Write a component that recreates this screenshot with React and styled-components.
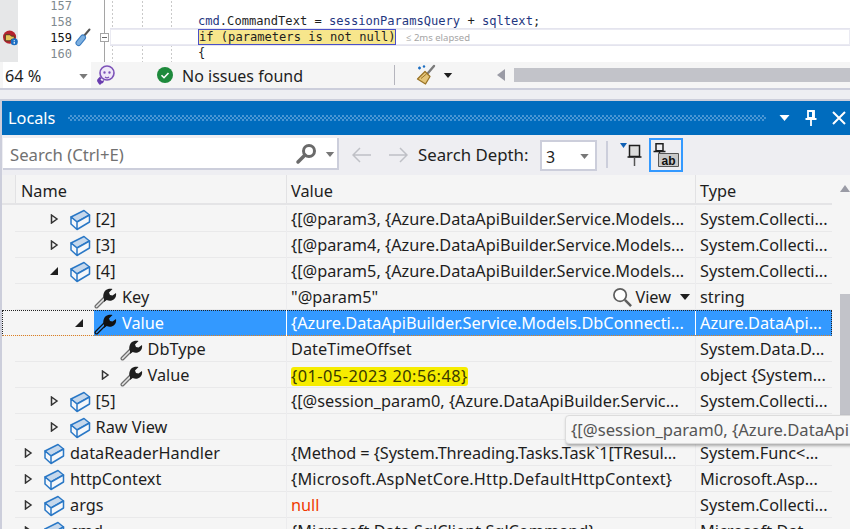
import React from 'react';
import styled, { createGlobalStyle } from 'styled-components';

const UI_FONT = `'Noto Sans', 'Open Sans', sans-serif`;
const CODE_FONT = `'DejaVu Sans Mono', 'Liberation Mono', monospace`;

const rows = [
	{ level: 1, kind: 'cube', arrow: 'closed', name: '[2]', value: '{[@param3, {Azure.DataApiBuilder.Service.Models...', type: 'System.Collecti...' },
	{ level: 1, kind: 'cube', arrow: 'closed', name: '[3]', value: '{[@param4, {Azure.DataApiBuilder.Service.Models...', type: 'System.Collecti...' },
	{ level: 1, kind: 'cube', arrow: 'open', name: '[4]', value: '{[@param5, {Azure.DataApiBuilder.Service.Models...', type: 'System.Collecti...' },
	{ level: 2, kind: 'wrench', name: 'Key', value: '"@param5"', type: 'string', view: true },
	{ level: 2, kind: 'wrench', arrow: 'open', name: 'Value', value: '{Azure.DataApiBuilder.Service.Models.DbConnecti...', type: 'Azure.DataApi...', selected: true },
	{ level: 3, kind: 'wrench', name: 'DbType', value: 'DateTimeOffset', type: 'System.Data.D...' },
	{ level: 3, kind: 'wrench', arrow: 'closed', name: 'Value', value: '{01-05-2023 20:56:48}', type: 'object {System...', changed: true },
	{ level: 1, kind: 'cube', arrow: 'closed', name: '[5]', value: '{[@session_param0, {Azure.DataApiBuilder.Servic...', type: 'System.Collecti...' },
	{ level: 1, kind: 'cube', arrow: 'closed', name: 'Raw View', value: '', type: '' },
	{ level: 0, kind: 'cube', arrow: 'closed', name: 'dataReaderHandler', value: '{Method = {System.Threading.Tasks.Task`1[TResul...', type: 'System.Func<...', tight: true },
	{ level: 0, kind: 'cube', arrow: 'closed', name: 'httpContext', value: '{Microsoft.AspNetCore.Http.DefaultHttpContext}', type: 'Microsoft.Asp...', wide: true },
	{ level: 0, kind: 'cube', arrow: 'closed', name: 'args', value: 'null', type: 'System.Collecti...', isNull: true },
	{ level: 0, kind: 'cube', arrow: 'closed', name: 'cmd', value: '{Microsoft.Data.SqlClient.SqlCommand}', type: 'Microsoft.Dat...' },
];

const CubeIcon = () => (
	<svg width="22" height="22" viewBox="0 0 22 22">
		<path d="M2 8 15 1.500l5.500 4.500L8 13z" fill="#c6d8ec" stroke="#2a78c6" strokeWidth="1.500" strokeLinejoin="round" />
		<path d="M2 8v7l6 5.500V13zM8 13v7.500l12.500-7.500V6z" fill="#f5f7fa" stroke="#2a78c6" strokeWidth="1.500" strokeLinejoin="round" />
	</svg>
);

const WrenchIcon = () => (
	<svg width="23" height="22" viewBox="0 0 23 22">
		<path d="M2.500 19.500 11 11" stroke="#6e6e6e" strokeWidth="4" strokeLinecap="round" />
		<path d="M2.500 19.500 11 11" stroke="#e4e4e4" strokeWidth="1.600" strokeLinecap="round" />
		<path d="M10 12c-1.500-3-.5-7 2-9 2-1.400 4.500-1.600 6.500-1L15 5.500l1 2.500 2.500.5L22 6c.5 2.500-.3 5-2.300 6.500-2.500 1.800-5 1.500-7 .5L10 15z" fill="#1e1e1e" />
	</svg>
);

const SelectedWrench = () => (
	<svg width="23" height="22" viewBox="0 0 23 22">
		<path d="M2.500 19.500 11 11" stroke="#111" strokeWidth="4" strokeLinecap="round" />
		<path d="M2.500 19.500 11 11" stroke="#3399ff" strokeWidth="1.500" strokeLinecap="round" />
		<path d="M10 12c-1.500-3-.5-7 2-9 2-1.400 4.500-1.600 6.500-1L15 5.500l1 2.500 2.500.5L22 6c.5 2.500-.3 5-2.300 6.500-2.500 1.800-5 1.500-7 .5L10 15z" fill="#111" />
	</svg>
);

const TreeArrow = ({ state }) => (
	<svg width="9" height="10" viewBox="0 0 9 10">
		{state === 'open' ? (
			<path d="M8 1v8H0z" fill="#1e1e1e" />
		) : (
			<path d="M1.500 1 7 5 1.500 9z" fill="#f5f5f5" stroke="#333" strokeWidth="1.500" />
		)}
	</svg>
);

const Caret = ({ color = '#1e1e1e', width = 11, height = 6 }) => (
	<svg width={width} height={height} viewBox="0 0 10 6">
		<path d="M0 0h10L5 6z" fill={color} />
	</svg>
);

const Magnifier = ({ size = 22, color = '#6a6a6a', flip }) => (
	<svg width={size} height={size} viewBox="0 0 22 22">
		{flip ? (
			<>
				<circle cx="14" cy="8" r="5.500" fill="none" stroke={color} strokeWidth="3" />
				<path d="M10 12 3 19" stroke={color} strokeWidth="3.500" strokeLinecap="round" />
			</>
		) : (
			<>
				<circle cx="8.500" cy="8.500" r="6.500" fill="#fff" stroke={color} strokeWidth="1.800" />
				<path d="m13.500 13.500 6.500 6.500" stroke={color} strokeWidth="2.600" />
			</>
		)}
	</svg>
);

const BreakpointIcon = () => (
	<svg width="16" height="16" viewBox="0 0 16 16">
		<circle cx="7" cy="7" r="7" fill="#b5222e" />
		<path d="M2.500 4.500h5l1.500 1.500h3v3.500H9L7.500 11h-5z" fill="#e6c35a" stroke="#4a3a20" strokeWidth="1" />
		<circle cx="12" cy="12" r="3.800" fill="#1b6ec2" />
		<path d="M12 10.500v.8M12 12v2.200" stroke="#fff" strokeWidth="1.200" />
	</svg>
);

const ScrewdriverIcon = () => (
	<svg width="16" height="19" viewBox="0 0 16 19">
		<path d="M8.500 8.500 14.500 1.500" stroke="#555" strokeWidth="2" strokeLinecap="round" />
		<path d="M3.500 15 8 9.500" stroke="#3b7cc0" strokeWidth="6" strokeLinecap="round" />
		<path d="M3.500 15 8 9.500" stroke="#7db0e0" strokeWidth="4" strokeLinecap="round" />
	</svg>
);

const IntelliIcon = () => (
	<svg width="19" height="21" viewBox="0 0 19 21">
		<circle cx="11" cy="8" r="7" fill="#efe8f8" stroke="#7c52b8" strokeWidth="1.600" />
		<path d="M8.500 7.500h.01M13.500 7.500h.01" stroke="#7c52b8" strokeWidth="2.400" strokeLinecap="round" />
		<path d="M9 12c1.300 1 2.700 1 4 0" stroke="#7c52b8" strokeWidth="1.200" fill="none" />
		<path d="M1 16c0-2.500 2-3 3-4.500l1.500 2-1 1 1.500 1.500 2-1c0 2-1 3.500-2.500 3.500L4 20l-1.500-1.500z" fill="#6a3db0" />
	</svg>
);

const CheckIcon = () => (
	<svg width="16" height="16" viewBox="0 0 16 16">
		<circle cx="8" cy="8" r="8" fill="#1e8a3c" />
		<path d="m4.500 8.200 2.500 2.500 4.500-4.700" fill="none" stroke="#fff" strokeWidth="1.600" />
	</svg>
);

const BroomIcon = () => (
	<svg width="21" height="22" viewBox="0 0 21 22">
		<path d="M12 9 18 2" stroke="#7b7b7b" strokeWidth="2.400" strokeLinecap="round" />
		<path d="M9 7.500 14 12.500 9.500 20 1.500 15z" fill="#e4c478" stroke="#9a7426" strokeWidth="1.300" strokeLinejoin="round" />
		<path d="M5 14.500 10.500 10" stroke="#9a7426" strokeWidth="1" />
		<path d="M2 4h3M3.500 2.500v3" stroke="#1b6ec2" strokeWidth="1.300" />
		<circle cx="8" cy="2.500" r="1.200" fill="#1b6ec2" />
	</svg>
);

const NavArrow = ({ flip }) => (
	<svg width="20" height="16" viewBox="0 0 20 16" style={flip ? { transform: 'scaleX(-1)' } : undefined}>
		<path d="M1 8h18M8 1 1 8l7 7" fill="none" stroke="#bfc0c6" strokeWidth="1.500" />
	</svg>
);

const PinFilterIcon = () => (
	<svg width="22" height="24" viewBox="0 0 22 24">
		<path d="M0 0h7L3.500 5z" fill="#0e5fb4" />
		<path d="M9.500 2.500h10v11h-10z" fill="#dcdcdc" stroke="#1e1e1e" strokeWidth="1.500" />
		<path d="M7.500 14h14" stroke="#1e1e1e" strokeWidth="1.500" />
		<path d="M14.500 14v9" stroke="#555" strokeWidth="1.500" />
	</svg>
);

const PinAbIcon = () => (
	<svg width="26" height="24" viewBox="0 0 26 24">
		<path d="M3 .8h7v7H3zM.5 8.500h12M6.500 8.500v6" fill="none" stroke="#1e1e1e" strokeWidth="1.500" />
		<path d="M5.500 10.500h20v13h-20z" fill="#c9c9c9" stroke="#555" strokeWidth="1" />
		<AbText x="8.500" y="21.500">ab</AbText>
	</svg>
);

const TitlePin = () => (
	<svg width="12" height="16" viewBox="0 0 12 16">
		<path d="M3 1h6v7H3zM0.500 9h11M6 9v7" fill="none" stroke="#fff" strokeWidth="1.800" />
		<path d="M7 1h2.500v7H7z" fill="#fff" />
	</svg>
);

const TitleClose = () => (
	<svg width="14" height="14" viewBox="0 0 14 14">
		<path d="m1 1 12 12M13 1 1 13" stroke="#fff" strokeWidth="2" />
	</svg>
);

const TreeRow = ({ row }) => {
	const { level, kind, arrow, name, value, type, selected, view, changed, isNull, tight, wide } = row;
	return (
		<Row $selected={selected}>
			<NameCell $level={level}>
				<ArrowSlot>{arrow && <TreeArrow state={arrow} />}</ArrowSlot>
				<NameBody $selected={selected}>
					<IconSlot $kind={kind}>
						{kind === 'cube' ? <CubeIcon /> : selected ? <SelectedWrench /> : <WrenchIcon />}
					</IconSlot>
					{name}
				</NameBody>
			</NameCell>
			<ValueCell $selected={selected} $isNull={isNull}>
				{changed ? <Changed>{value}</Changed> : <ValueText $tight={tight} $wide={wide}>{value}</ValueText>}
				{view && (
					<ViewLink>
						<Magnifier size={21} color="#5e5e5e" />
						<span>View</span>
						<CaretGap>
							<Caret width={12} height={6} />
						</CaretGap>
					</ViewLink>
				)}
			</ValueCell>
			<TypeCell $selected={selected}>{type}</TypeCell>
		</Row>
	);
};

const App = () => {
	return (
		<Page>
			<GlobalStyle />
			<Editor>
				<BreakMargin>
					<BreakSlot>
						<BreakpointIcon />
					</BreakSlot>
				</BreakMargin>
				<LineNumbers>
					<LineNo>157</LineNo>
					<LineNo>158</LineNo>
					<LineNo $current>
						159
						<ScrewSlot>
							<ScrewdriverIcon />
						</ScrewSlot>
					</LineNo>
					<LineNo>160</LineNo>
				</LineNumbers>
				<CodeArea>
					<OutlineColumn>
						<CollapseBox />
					</OutlineColumn>
					<CodeLines>
						<CodeLine />
						<CodeLine>
							<Ident>cmd</Ident>.CommandText = <Ident>sessionParamsQuery</Ident> + <Ident>sqltext</Ident>;
						</CodeLine>
						<CodeLine $current>
							<Statement>if (parameters is not null)</Statement>
							<Elapsed>≤ 2ms elapsed</Elapsed>
						</CodeLine>
						<CodeLine>{'{'}</CodeLine>
					</CodeLines>
				</CodeArea>
			</Editor>
			<StatusBar>
				<ZoomSelect>
					<span>64 %</span>
					<Caret color="#7a7a7a" width={9} height={5} />
				</ZoomSelect>
				<IntelliSlot>
					<IntelliIcon />
				</IntelliSlot>
				<IssuesBlock>
					<CheckIcon />
					<IssuesText>No issues found</IssuesText>
				</IssuesBlock>
				<StatusSep />
				<BroomSlot>
					<BroomIcon />
					<Caret width={10} height={5} />
				</BroomSlot>
				<HScroll>
					<ScrollArrow />
					<ScrollTrack />
				</HScroll>
			</StatusBar>
			<Splitter />
			<Panel>
				<TitleBar>
					<TitleText>Locals</TitleText>
					<Grip />
					<TitleButtons>
						<Caret color="#fff" width={11} height={6} />
						<TitlePin />
						<TitleClose />
					</TitleButtons>
				</TitleBar>
				<ToolRow>
					<SearchBox>
						<SearchText>Search (Ctrl+E)</SearchText>
						<Magnifier size={22} flip />
						<SearchCaret>
							<Caret color="#777" width={10} height={5} />
						</SearchCaret>
					</SearchBox>
					<NavGroup>
						<NavArrow />
						<NavArrow flip />
					</NavGroup>
					<DepthLabel>Search Depth:</DepthLabel>
					<DepthSelect>
						<span>3</span>
						<Caret color="#777" width={9} height={5} />
					</DepthSelect>
					<ToolSep />
					<ToolIcon>
						<PinFilterIcon />
					</ToolIcon>
					<ActiveToolIcon>
						<PinAbIcon />
					</ActiveToolIcon>
				</ToolRow>
				<GridWrap>
					<GridBody>
						<HeaderRow>
							<HeaderGutter />
							<HeaderName>Name</HeaderName>
							<HeaderCell>Value</HeaderCell>
							<HeaderCell>Type</HeaderCell>
						</HeaderRow>
						{rows.map((row, i) => (
							<TreeRow key={i} row={row} />
						))}
					</GridBody>
					<VScroll>
						<VArrow />
						<VThumb />
					</VScroll>
				</GridWrap>
				<ValueTip>{'{[@session_param0, {Azure.DataApi'}</ValueTip>
			</Panel>
		</Page>
	);
};

export default App;

const GlobalStyle = createGlobalStyle`
	html, body {
		margin: 0;
		padding: 0;
		background: #eeeef2;
		overflow: hidden;
	}
`;
const Page = styled.div`
	width: 850px;
	height: 529px;
	overflow: hidden;
	position: relative;
	display: flex;
	flex-direction: column;
	font-family: ${UI_FONT};
	font-size: 16px;
	color: #1e1e1e;
	background: #eeeef2;
`;
const AbText = styled.text`
	font-family: 'Liberation Sans', sans-serif;
	font-size: 12px;
	font-weight: 700;
	fill: #111;
`;
const Editor = styled.div`
	height: 62px;
	flex: none;
	display: flex;
	background: #fff;
	overflow: hidden;
`;
const BreakMargin = styled.div`
	width: 18px;
	flex: none;
	background: #e6e7e8;
`;
const BreakSlot = styled.div`
	padding: 30px 0 0 3px;
	display: flex;
`;
const LineNumbers = styled.div`
	width: 54px;
	flex: none;
	margin-top: -2px;
	font-family: ${CODE_FONT};
	font-size: 12px;
	text-align: right;
`;
const LineNo = styled.div`
	height: 16px;
	line-height: 16px;
	color: ${(props) => (props.$current ? '#111' : '#7f8a8f')};
	position: relative;
`;
const ScrewSlot = styled.span`
	position: absolute;
	left: 57px;
	top: -2px;
`;
const CodeArea = styled.div`
	flex: 1;
	display: flex;
	min-width: 0;
`;
const OutlineColumn = styled.div`
	width: 38px;
	flex: none;
	position: relative;
	background: linear-gradient(#a5a5a5, #a5a5a5) 32px 0 / 1px 100% no-repeat;
`;
const CollapseBox = styled.div`
	position: absolute;
	left: 28px;
	top: 33px;
	width: 9px;
	height: 9px;
	box-sizing: border-box;
	border: 1px solid #a5a5a5;
	background: linear-gradient(#666, #666) center / 5px 1px no-repeat #fff;
`;
const CodeLines = styled.div`
	flex: 1;
	min-width: 0;
	margin-top: -3px;
	font-family: ${CODE_FONT};
	font-size: 12.1px;
	color: #1e1e1e;
	background-image: repeating-linear-gradient(#c9c9c9 0 2px, transparent 2px 4px),
		repeating-linear-gradient(#c9c9c9 0 2px, transparent 2px 4px),
		repeating-linear-gradient(#c9c9c9 0 2px, transparent 2px 4px);
	background-size: 1px 100%;
	background-position: 2px 0, 32px 0, 61px 0;
	background-repeat: no-repeat;
`;
const CodeLine = styled.div`
	height: 16px;
	line-height: 16px;
	padding-left: 88px;
	box-sizing: border-box;
	white-space: nowrap;
	${(props) =>
		props.$current &&
		`background: #fff;
		box-shadow: 0 -1px 0 #e4e4ee, 0 1px 0 #e4e4ee, inset 0 0 0 1px #eaeaf2;`}
`;
const Ident = styled.span`
	color: #1f377f;
`;
const Statement = styled.span`
	display: inline-block;
	height: 16px;
	line-height: 15px;
	width: 198px;
	box-sizing: border-box;
	background: #f7e68c;
	border: 1px solid #4a50c8;
	color: #1e1e1e;
	vertical-align: top;
`;
const Elapsed = styled.span`
	font-family: ${UI_FONT};
	font-size: 9.5px;
	color: #a5a5a5;
	margin-left: 10px;
`;
const StatusBar = styled.div`
	height: 26px;
	flex: none;
	display: flex;
	align-items: center;
	background: #f5f5f5;
	border-bottom: 2px solid #ccceDB;
`;
const ZoomSelect = styled.div`
	width: 88px;
	height: 26px;
	margin-left: 3px;
	padding: 2px 3px 0 2px;
	box-sizing: border-box;
	flex: none;
	display: flex;
	align-items: center;
	justify-content: space-between;
	background: #fff;
	font-size: 16.3px;
`;
const IntelliSlot = styled.div`
	margin-left: 5px;
	width: 61px;
	flex: none;
	display: flex;
`;
const IssuesBlock = styled.div`
	width: 237px;
	flex: none;
	display: flex;
	align-items: center;
	gap: 9px;
	font-size: 16px;
`;
const IssuesText = styled.span`
	padding-top: 2px;
`;
const StatusSep = styled.div`
	width: 1px;
	height: 20px;
	flex: none;
	background: #b5b5bd;
`;
const BroomSlot = styled.div`
	margin-left: 21px;
	width: 81px;
	flex: none;
	display: flex;
	align-items: center;
	gap: 6px;
`;
const HScroll = styled.div`
	flex: 1;
	display: flex;
	align-items: center;
	gap: 9px;
`;
const ScrollArrow = styled.div`
	width: 0;
	height: 0;
	border-style: solid;
	border-width: 6px 8px 6px 0;
	border-color: transparent #9a9ba5 transparent transparent;
`;
const ScrollTrack = styled.div`
	flex: 1;
	height: 14px;
	background: #c2c3c9;
`;
const Splitter = styled.div`
	height: 9px;
	flex: none;
	background: #eeeef2;
	border-bottom: 2px solid #ccceDB;
`;
const Panel = styled.div`
	flex: 1;
	min-height: 0;
	display: flex;
	flex-direction: column;
	padding-left: 2px;
	background: linear-gradient(#ccceDB, #ccceDB) 0 0 / 2px 100% no-repeat #eeeef2;
	overflow: hidden;
`;
const TitleBar = styled.div`
	height: 34px;
	flex: none;
	display: flex;
	align-items: center;
	padding-left: 6px;
	background: #006cbe;
`;
const TitleText = styled.div`
	color: #fff;
	font-size: 16.3px;
`;
const Grip = styled.div`
	width: 698px;
	height: 6px;
	margin-left: 13px;
	flex: none;
	background-image: repeating-conic-gradient(#4a96d4 0 25%, transparent 0 50%);
	background-size: 4px 4px;
`;
const TitleButtons = styled.div`
	flex: 1;
	display: flex;
	align-items: center;
	padding-left: 13px;
	gap: 15px;
`;
const ToolRow = styled.div`
	height: 40px;
	flex: none;
	display: flex;
	align-items: flex-start;
	background: #eeeef2;
`;
const SearchBox = styled.div`
	width: 336px;
	height: 32px;
	margin: 3px 0 0 1px;
	flex: none;
	box-sizing: border-box;
	display: flex;
	align-items: center;
	padding: 2px 1px 0 7px;
	background: #fff;
	border-bottom: 2px solid #ccceDB;
	border-right: 2px solid #ccceDB;
`;
const SearchText = styled.div`
	flex: 1;
	color: #717171;
	font-size: 16.7px;
`;
const SearchCaret = styled.div`
	margin-left: 8px;
	width: 11px;
	display: flex;
`;
const NavGroup = styled.div`
	display: flex;
	gap: 16px;
	margin: 12px 0 0 13px;
`;
const DepthLabel = styled.div`
	margin: 8px 0 0 10px;
	width: 122px;
	flex: none;
	font-size: 16.8px;
`;
const DepthSelect = styled.div`
	width: 57px;
	height: 31px;
	flex: none;
	box-sizing: border-box;
	margin-top: 5px;
	padding: 2px 6px 0 4px;
	display: flex;
	align-items: center;
	justify-content: space-between;
	background: #fff;
	border: 2px solid #ccceDB;
`;
const ToolSep = styled.div`
	width: 2px;
	height: 27px;
	margin: 6px 0 0 9px;
	flex: none;
	background: #ccceDB;
`;
const ToolIcon = styled.div`
	width: 22px;
	height: 24px;
	margin: 8px 0 0 12px;
	flex: none;
	display: flex;
`;
const ActiveToolIcon = styled.div`
	width: 34px;
	height: 34px;
	margin: 3px 0 0 7px;
	flex: none;
	box-sizing: border-box;
	display: flex;
	align-items: center;
	justify-content: center;
	border: 2px solid #3399ff;
`;
const GridWrap = styled.div`
	flex: 1;
	min-height: 0;
	display: flex;
	background: #f5f5f5;
`;
const GridBody = styled.div`
	width: 830px;
	flex: none;
`;
const HeaderRow = styled.div`
	height: 30px;
	display: grid;
	grid-template-columns: 13px 271px 409px 137px;
	box-sizing: border-box;
	border-bottom: 2px solid #e4e4e6;
	margin-bottom: 1px;
`;
const HeaderGutter = styled.div`
	background: #f2f2f2;
`;
const HeaderCell = styled.div`
	display: flex;
	align-items: center;
	padding: 3px 0 0 4px;
	border-left: 1px solid #e2e2e4;
	font-size: 16.3px;
`;
const HeaderName = styled(HeaderCell)`
	padding-left: 5px;
`;
const Row = styled.div`
	height: 26px;
	display: grid;
	grid-template-columns: 284px 409px 137px;
	box-sizing: border-box;
	background: linear-gradient(#e9e9ea, #e9e9ea) 13px 100% / 100% 1px no-repeat;
	white-space: nowrap;
	font-size: 16.3px;
	position: relative;
	${(props) =>
		props.$selected &&
		`&::after {
			content: '';
			position: absolute;
			inset: 0;
			border: 1px dotted #222;
			border-bottom: 1px dotted #e08020;
			pointer-events: none;
		}`}
`;
const NameCell = styled.div`
	display: flex;
	align-items: center;
	padding-left: ${(props) => 22 + props.$level * 25.5}px;
	min-width: 0;
`;
const ArrowSlot = styled.div`
	width: 19px;
	flex: none;
	display: flex;
`;
const NameBody = styled.div`
	flex: 1;
	height: 100%;
	display: flex;
	align-items: center;
	gap: 5px;
	${(props) => props.$selected && 'background: #3399ff; color: #fff;'}
`;
const IconSlot = styled.div`
	display: flex;
	flex: none;
	margin-top: 1px;
`;
const ValueCell = styled.div`
	display: flex;
	align-items: center;
	justify-content: space-between;
	padding: 0 2px 0 4px;
	min-width: 0;
	border-left: 1px solid ${(props) => (props.$selected ? '#fff' : '#ececee')};
	color: ${(props) => (props.$isNull ? '#f03a00' : props.$selected ? '#fff' : '#1e1e1e')};
	${(props) => props.$selected && 'background: #3399ff;'}
`;
const ValueText = styled.span`
	overflow: hidden;
	${(props) => props.$tight && 'letter-spacing: -0.1px;'}
	${(props) => props.$wide && 'letter-spacing: 0.2px;'}
`;
const Changed = styled.span`
	margin-top: 2px;
	background: #f6ec00;
	border-radius: 3px;
	line-height: 19px;
	letter-spacing: 0.5px;
	color: #3a3a00;
`;
const ViewLink = styled.span`
	display: flex;
	align-items: center;
	gap: 2px;
`;
const CaretGap = styled.span`
	display: flex;
	margin: 0 2px 0 6px;
`;
const TypeCell = styled(ValueCell)`
	overflow: hidden;
`;
const VScroll = styled.div`
	flex: 1;
	padding: 10px 0 0 8px;
`;
const VArrow = styled.div`
	width: 0;
	height: 0;
	border-style: solid;
	border-width: 0 5.5px 7px 5.5px;
	border-color: transparent transparent #9a9ba5 transparent;
`;
const VThumb = styled.div`
	width: 12px;
	height: 130px;
	margin-top: 102px;
	background: #c2c3c9;
`;
const ValueTip = styled.div`
	position: absolute;
	left: 565px;
	top: 415px;
	width: 320px;
	height: 29px;
	line-height: 28px;
	box-sizing: border-box;
	padding-left: 5px;
	white-space: nowrap;
	overflow: hidden;
	font-size: 16.6px;
	color: #555;
	background: #f7f7f7;
	border: 1px solid #dcdcdc;
	border-radius: 4px;
	box-shadow: 1px 2px 3px rgba(0, 0, 0, 0.3);
`;
